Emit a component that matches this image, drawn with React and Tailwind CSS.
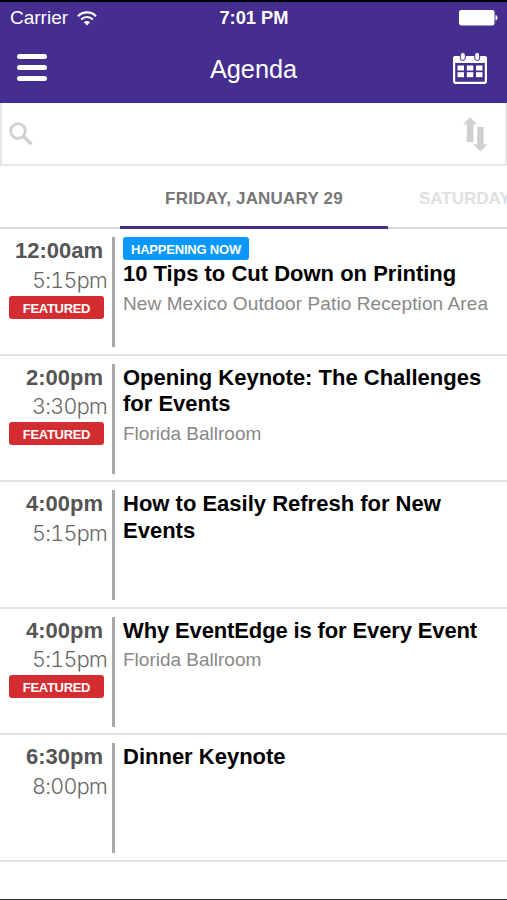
const sessions = [
	{
		start: "12:00am",
		end: "5:15pm",
		featured: true,
		now: true,
		title: "10 Tips to Cut Down on Printing",
		location: "New Mexico Outdoor Patio Reception Area",
	},
	{
		start: "2:00pm",
		end: "3:30pm",
		featured: true,
		title: "Opening Keynote: The Challenges for Events",
		location: "Florida Ballroom",
	},
	{
		start: "4:00pm",
		end: "5:15pm",
		title: "How to Easily Refresh for New Events",
	},
	{
		start: "4:00pm",
		end: "5:15pm",
		featured: true,
		tight: true,
		title: "Why EventEdge is for Every Event",
		location: "Florida Ballroom",
	},
	{
		start: "6:30pm",
		end: "8:00pm",
		title: "Dinner Keynote",
	},
];

const WifiIcon = () => (
	<svg width="20" height="15" viewBox="0 0 20 15" fill="none" stroke="#fff" strokeWidth="2.1">
		<path d="M1 5.2a12.6 12.6 0 0 1 18 0" />
		<path d="M4.2 8.4a8.2 8.2 0 0 1 11.6 0" />
		<path d="M10 14.6 6.9 11.2a4.4 4.4 0 0 1 6.2 0Z" fill="#fff" stroke="none" />
	</svg>
);

const BatteryIcon = () => (
	<svg width="39" height="16" viewBox="0 0 39 16" fill="#fff">
		<rect width="35.5" height="15.5" rx="2.2" />
		<path d="M36.5 5c1.3.3 2 1.3 2 2.8s-.7 2.5-2 2.8Z" />
	</svg>
);

const CalendarIcon = () => (
	<svg width="34" height="32" viewBox="0 0 34 32">
		<rect x="1.1" y="5.1" width="31.8" height="25.8" rx="2" fill="none" stroke="#fff" strokeWidth="2.2" />
		<path d="M0 11V6.5A2.5 2.5 0 0 1 2.5 4h29A2.5 2.5 0 0 1 34 6.5V11Z" fill="#fff" />
		<g fill="#fff" stroke="#452e90" strokeWidth="1">
			<rect x="7.3" y=".5" width="5" height="8" rx="2.5" />
			<rect x="21.7" y=".5" width="5" height="8" rx="2.5" />
		</g>
		<g fill="#fff">
			<rect x="4.5" y="13.5" width="6.5" height="5" />
			<rect x="13.8" y="13.5" width="6.5" height="5" />
			<rect x="23" y="13.5" width="6.5" height="5" />
			<rect x="4.5" y="20.2" width="6.5" height="5" />
			<rect x="13.8" y="20.2" width="6.5" height="5" />
			<rect x="23" y="20.2" width="6.5" height="5" />
		</g>
	</svg>
);

const SearchIcon = () => (
	<svg width="24" height="24" viewBox="0 0 24 24" fill="none" stroke="#d0d0d0">
		<circle cx="9" cy="9" r="7.3" strokeWidth="2.8" />
		<path d="M14.3 14.3 22.6 22.3" strokeWidth="3.4" />
	</svg>
);

const SortIcon = () => (
	<svg width="25" height="35" viewBox="0 0 25 35" fill="#d0d0d0">
		<path d="M7 0 14 7.5h-3.6V25H3.8V7.5H0Z" />
		<path d="M14.2 10h6.4v17.2h4L17.4 34.5 10.2 27.2h4Z" />
	</svg>
);

const Session = ({ start, end, featured, now, tight, title, location }) => (
	<li className="flex h-[126.5px] border-b-2 border-[#e2e2e2] pt-2">
		<div className="flex w-[112px] flex-col text-right text-[22px]">
			<p className="pr-[9px] font-bold leading-[28.5px] text-[#555]">{start}</p>
			<p className="pr-[5px] font-['Inter','Liberation_Sans',sans-serif] text-[21.5px] font-light tabular-nums leading-[29px] tracking-[-0.7px] text-[#666]">
				{end}
			</p>
			{featured && (
				<span className="ml-[9px] mt-[1px] h-[23px] w-[95px] rounded-[3px] bg-[#d32d31] text-center text-[13px] font-bold leading-[25px] tracking-[-0.3px] text-white">
					FEATURED
				</span>
			)}
		</div>
		<div className="h-[110px] w-[3px] bg-[#aaa]" />
		<div className="flex flex-1 flex-col items-start pl-2">
			{now && (
				<span className="mb-[1px] h-[23px] w-[126px] rounded-[3px] bg-[#0a98fc] text-center text-[13px] font-bold leading-[25px] tracking-[-0.2px] text-white">
					HAPPENING NOW
				</span>
			)}
			<h2
				className={`${now ? "" : "pt-[1px]"} ${tight ? "tracking-[-0.13px]" : ""} max-w-[370px] text-[22px] font-bold leading-[26.5px] text-black`}
			>
				{title}
			</h2>
			{location && (
				<p className={`${now ? "tracking-[0.1px]" : ""} mt-[3px] whitespace-nowrap text-[19px] leading-[26px] text-[#888]`}>
					{location}
				</p>
			)}
		</div>
	</li>
);

const App = () => {
	return (
		<div className="flex h-[900px] w-[507px] flex-col overflow-hidden border-b border-[#333] bg-white font-['Liberation_Sans',Arial,sans-serif]">
			<header className="h-[103px] border-t-2 border-black bg-[#452e90] text-white">
				<div className="grid h-8 grid-cols-3 items-center pl-[10px] pr-[9px]">
					<div className="flex items-center gap-[9px] pt-[1px] text-[19px]">
						<span>Carrier</span>
						<WifiIcon />
					</div>
					<span className="text-center text-[18.3px] font-bold">7:01 PM</span>
					<div className="flex justify-end">
						<BatteryIcon />
					</div>
				</div>
				<div className="flex h-[67px] items-center justify-between pl-[17px] pr-5">
					<div className="flex w-[37px] flex-col gap-[6px]">
						<span className="h-[5px] w-[30px] rounded-full bg-white" />
						<span className="h-[5px] w-[30px] rounded-full bg-white" />
						<span className="h-[5px] w-[30px] rounded-full bg-white" />
					</div>
					<h1 className="pt-1 text-[25.3px]">Agenda</h1>
					<CalendarIcon />
				</div>
			</header>

			<div className="flex h-[63px] items-center justify-between border-2 border-t-0 border-[#e6e6e6] pl-[7px] pr-[17px] pt-[1px]">
				<SearchIcon />
				<SortIcon />
			</div>

			<nav className="flex h-[63px] whitespace-nowrap border-b-2 border-[#dcdcdc] pl-[120px] text-[17px] font-bold leading-[65px]">
				<span className="h-[63px] w-[268px] shrink-0 border-b-[3px] border-[#452e90] text-center tracking-[0.2px] text-[#777]">
					FRIDAY, JANUARY 29
				</span>
				<span className="pl-[31px] text-[#e0e0e0]">SATURDAY</span>
			</nav>

			<ul>
				{sessions.map((session) => (
					<Session key={session.start + session.title} {...session} />
				))}
			</ul>
		</div>
	);
};

export default App;
